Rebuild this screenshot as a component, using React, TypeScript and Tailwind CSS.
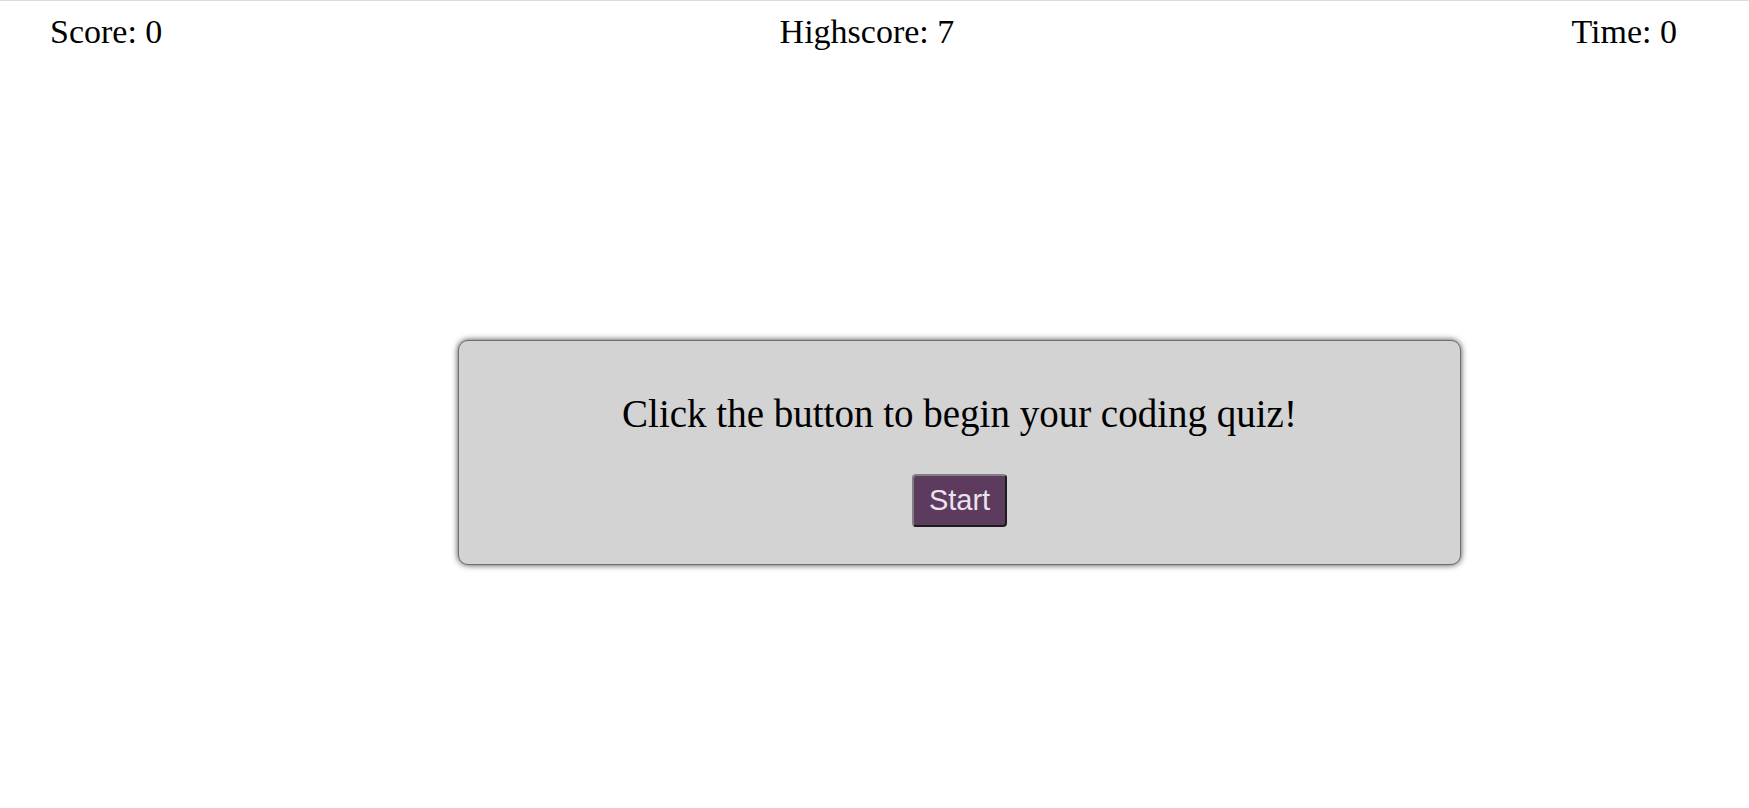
import React, { useState } from 'react';

export default function App() {
  const [score] = useState(0);
  const [highscore] = useState(7);
  const [time] = useState(0);

  return (
    <div className="min-h-[808px] bg-white border-t border-[#dcdce0] font-['Liberation_Serif',serif] text-black">
      {/* Header */}
      <div className="flex justify-between pl-[50px] pr-[72px] pt-[12px] text-[34px] leading-[38px]">
        <div>Score: {score}</div>
        <div>Highscore: {highscore}</div>
        <div>Time: {time}</div>
      </div>

      {/* Start card */}
      <div className="mt-[289px] ml-[458px] w-[1003px] h-[225px] bg-[#d3d3d3] border border-[#6e6e6e] rounded-[10px] shadow-[0_0_6px_rgba(0,0,0,0.75)] flex flex-col items-center pt-[50px]">
        <p className="text-[39px] leading-[45px]">Click the button to begin your coding quiz!</p>
        <button className="mt-[38px] px-[15px] py-[8px] bg-[#5d3b5f] text-[#ebe2eb] font-['Liberation_Sans',sans-serif] text-[29px] leading-[33px] rounded-[4px] border-2 border-t-[#808080] border-l-[#808080] border-r-[#1c1c1c] border-b-[#1c1c1c]">
          Start
        </button>
      </div>
    </div>
  );
}
